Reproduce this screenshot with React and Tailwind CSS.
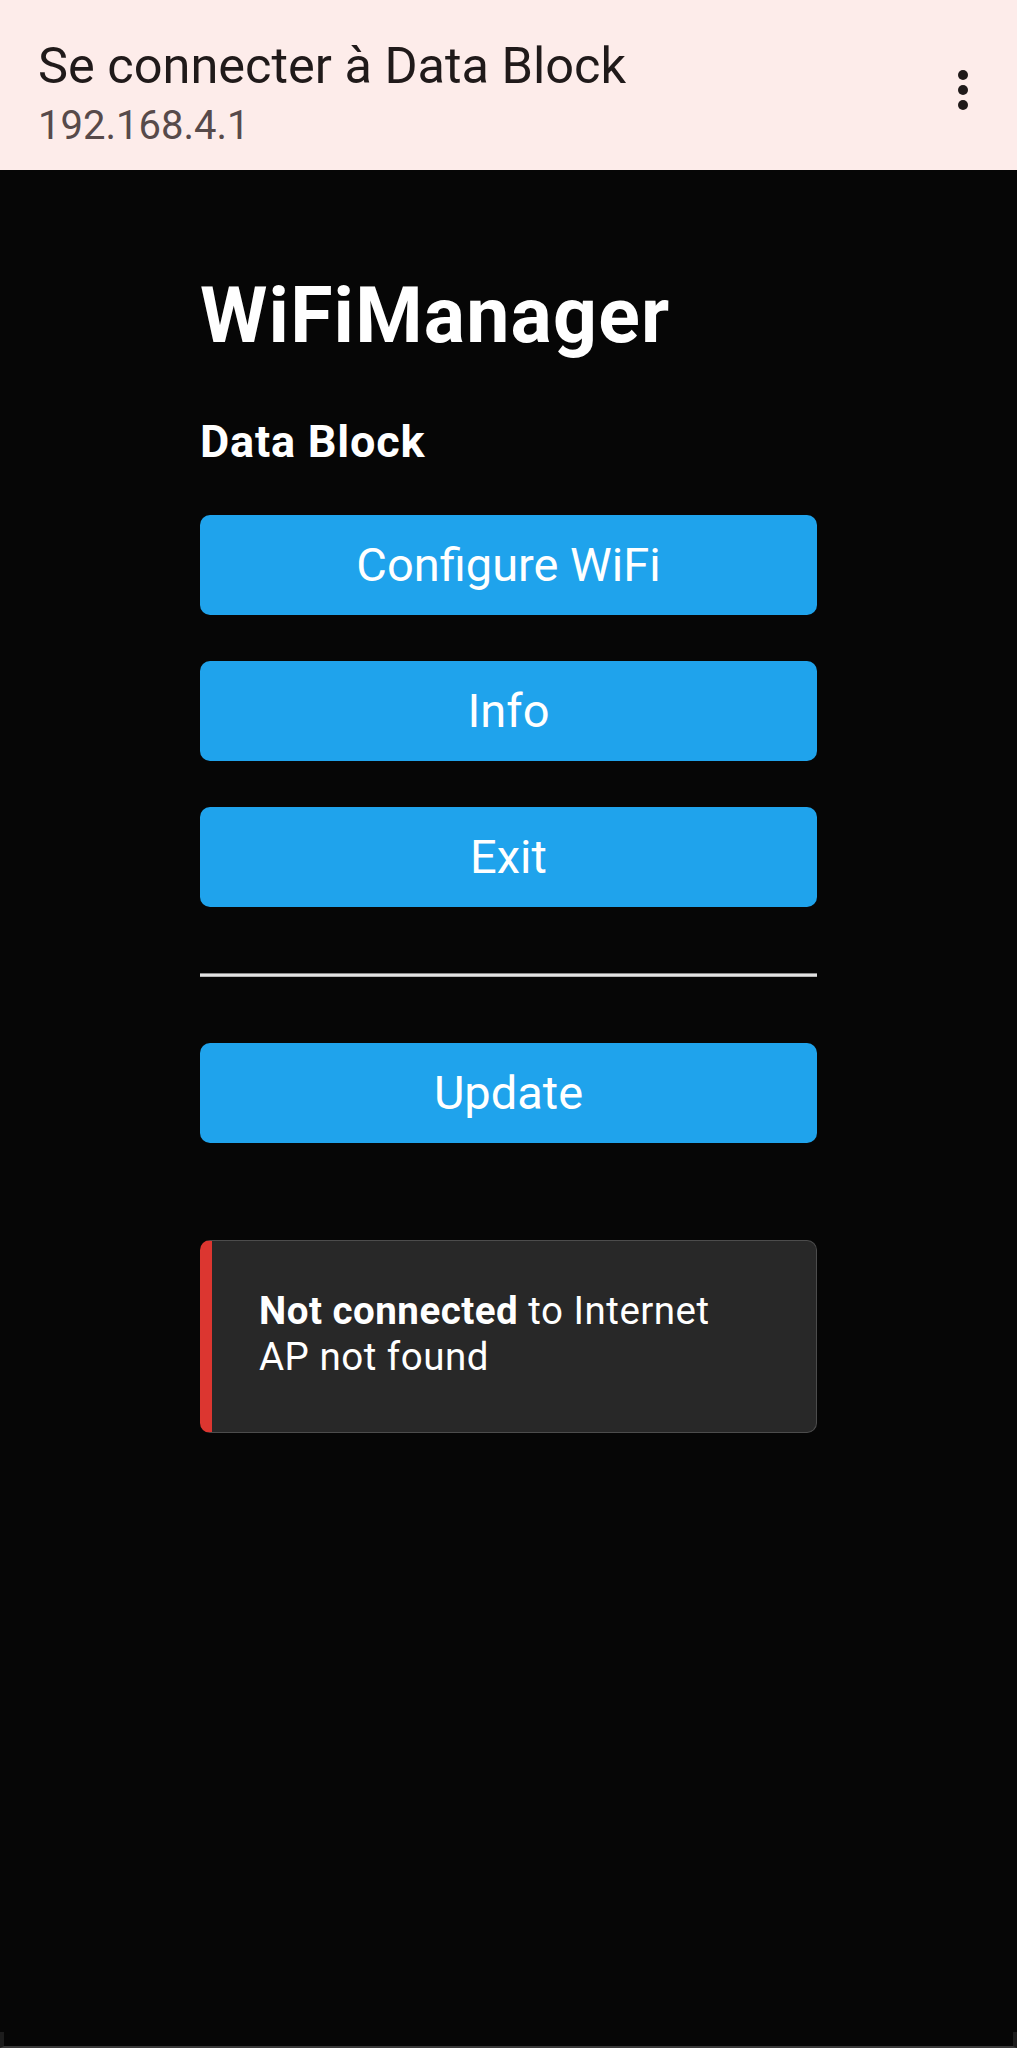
const MenuButton = ({ label }) => (
  <button className="w-full h-[100px] rounded-[10px] bg-[#1fa3ec] text-white text-[47px] leading-[100px] text-center">
    {label}
  </button>
);

const App = () => {
  return (
    <div className="w-[1017px] h-[2048px] flex flex-col bg-[#060606] font-['Roboto',sans-serif]">
      {/* top bar */}
      <header className="h-[170px] shrink-0 bg-[#fdecea] flex justify-between pl-[38px] pr-[49px]">
        <div className="pt-[38px]">
          <h1 className="text-[50.5px] leading-[56px] text-[#201a1a] font-normal">Se connecter à Data Block</h1>
          <p className="mt-[10px] text-[40px] leading-[44px] text-[#574a4a]">192.168.4.1</p>
        </div>
        <div className="pt-[70px] flex flex-col gap-[5px]">
          <span className="w-[10px] h-[10px] rounded-full bg-[#201a1a]"></span>
          <span className="w-[10px] h-[10px] rounded-full bg-[#201a1a]"></span>
          <span className="w-[10px] h-[10px] rounded-full bg-[#201a1a]"></span>
        </div>
      </header>

      <main className="flex-1 flex justify-center pt-[101px]">
        <div className="w-[617px] flex flex-col text-white">
          <h2 className="text-[77px] leading-[90px] font-bold tracking-[1.2px]">WiFiManager</h2>
          <h3 className="mt-[54px] text-[45px] leading-[54px] font-bold tracking-[0.8px]">Data Block</h3>

          <div className="mt-[46px] flex flex-col gap-[46px]">
            <MenuButton label="Configure WiFi" />
            <MenuButton label="Info" />
            <MenuButton label="Exit" />
          </div>

          <div className="mt-[66px] h-[4px] border-t border-b border-t-[#8a8a8a] border-b-[#b4b4b4] bg-[#e2e2e2]"></div>

          <div className="mt-[66px]">
            <MenuButton label="Update" />
          </div>

          <div className="mt-[97px] h-[193px] rounded-[10px] border border-[#4c4c4c] border-l-[12px] border-l-[#dc3630] bg-[#282828] pt-[47px] pl-[47px] text-[38.5px] leading-[46px] tracking-[0.5px]">
            <div>
              <span className="font-bold">Not connected</span> to Internet
            </div>
            <div>AP not found</div>
          </div>
        </div>
      </main>

      <div className="h-[16px] shrink-0 border-x-[4px] border-x-[#1c1c1c] border-b-2 border-b-[#3a3a3a]"></div>
    </div>
  );
};

export default App;
